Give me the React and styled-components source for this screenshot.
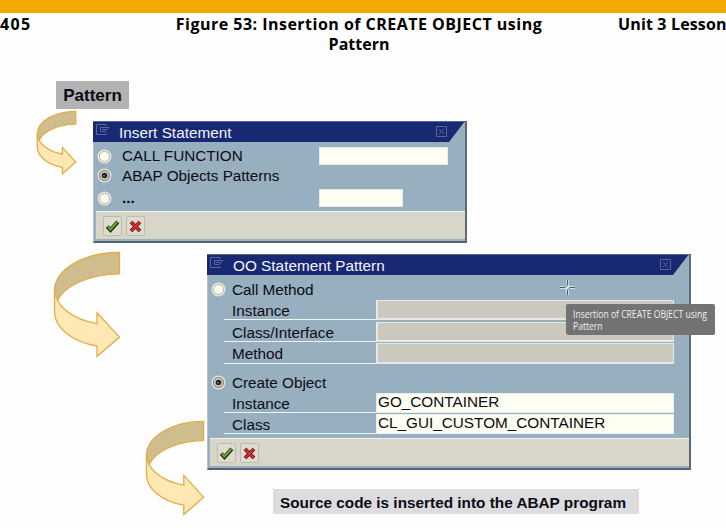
import React from "react";
import styled, { createGlobalStyle } from "styled-components";

const GlobalStyle = createGlobalStyle`
  * { box-sizing: border-box; }
  body { margin: 0; background: #fefefe; }
`;

const Page = styled.div`
  position: relative;
  width: 726px;
  height: 528px;
  overflow: hidden;
  background: #fefefe;
  color: #0a0c14;
  font: 15.3px/18px "Liberation Sans", Arial, sans-serif;
  white-space: nowrap;
`;

const TopBar = styled.div`
  height: 13px;
  background: #f2a900;
`;

const Header = styled.header`
  display: grid;
  grid-template-columns: 100px 518px 108px;
  height: 68px;
  padding-top: 1px;
  color: #000;
  font: 700 16px/20px "Open Sans", "Noto Sans", sans-serif;
`;

const HeaderText = styled.div`
  letter-spacing: ${(p) => p.$spacing}px;
  text-align: ${(p) => p.$align || "left"};
`;

const PatternTag = styled.div`
  width: 73px;
  height: 28px;
  margin-left: 56px;
  background: #b2b2b2;
  font-size: 17px;
  font-weight: bold;
  line-height: 30px;
  text-align: center;
`;

const Step = styled.section`
  display: flex;
  align-items: flex-start;
`;

const ArrowColumn = styled.div`
  display: flex;
  flex-direction: column;
  flex: none;
  width: ${(p) => p.$width}px;
`;

const ArrowSvg = styled.svg`
  display: block;
  width: ${(p) => p.$w}px;
  height: ${(p) => p.$h}px;
  margin: ${(p) => p.$top}px 0 0 ${(p) => p.$left}px;
  overflow: visible;

  path {
    stroke: #e3ad45;
    stroke-width: 1.3;
    vector-effect: non-scaling-stroke;
    stroke-linejoin: miter;
  }
`;

const Window = styled.div`
  display: flex;
  flex-direction: column;
  width: ${(p) => p.$w}px;
  height: ${(p) => p.$h}px;
  margin-top: ${(p) => p.$top}px;
  background: #98afbf;
  border-left: 1px solid #b9c2cc;
  border-right: 2px solid #5c6b7a;
  border-bottom: 2px solid #536474;
`;

const TitleBar = styled.div`
  display: flex;
  flex: none;
  height: 21px;
  margin-left: -1px;
  padding: 0 18px 0 3px;
  background: #182873;
  border-top: 1px solid #59648f;
  clip-path: polygon(0 0, 100% 0, calc(100% - 16px) 100%, 0 100%);
`;

const TitleText = styled.div`
  flex: 1;
  margin-left: 9px;
  color: #f4f5fa;
  letter-spacing: 0.02px;
  line-height: 22px;
`;

const TitleSvg = styled.svg`
  flex: none;
  margin-top: ${(p) => p.$top}px;
  fill: none;
  stroke: #5a659f;
`;

const Body = styled.div`
  flex: 1;
  padding-top: ${(p) => p.$top}px;
`;

const Footer = styled.div`
  display: flex;
  gap: 4px;
  flex: none;
  height: 28px;
  margin: 0 0 2px 2px;
  padding: 4px 0 0 7px;
  background: #d8d6c9;
  border-top: 1px solid #eef3f3;
`;

const ToolButton = styled.button`
  display: flex;
  align-items: center;
  justify-content: center;
  width: 19px;
  height: 20px;
  padding: 0;
  background: #dedccf;
  border: 1px solid #bdbbad;
  border-radius: 2px;
`;

const OptionRow = styled.label`
  display: flex;
  align-items: center;
  height: ${(p) => p.$h}px;
  margin-top: ${(p) => p.$gap || 0}px;
  padding-left: 3px;
`;

const OptionText = styled.span`
  width: 197px;
  margin-left: ${(p) => p.$left}px;
  letter-spacing: -0.02px;
  font-weight: ${(p) => (p.$bold ? "bold" : "normal")};
`;

const Entry = styled.div`
  width: ${(p) => p.$w}px;
  height: 18px;
  background: #fffef2;
  border: 1px solid #e2edf0;
`;

const FieldRow = styled.div`
  display: flex;
  height: ${(p) => p.$h}px;
  margin: ${(p) => p.$gap || 0}px 0 0 16px;
`;

const FieldLabel = styled.div`
  width: 152px;
  padding: 2px 0 0 8px;
  border-bottom: 1px solid #edf3f6;
  letter-spacing: 0;
`;

const FieldBox = styled.div`
  width: 298px;
  padding-left: 1px;
  background: ${(p) => (p.$disabled ? "#cbc9bd" : "#fffef2")};
  border: ${(p) => (p.$disabled ? "2px solid #e3e8e8" : "1px solid #e8f0ee")};
  border-width: ${(p) => (p.$disabled ? "1px 1px 2px 2px" : "1px")};
  letter-spacing: 0;
  line-height: 16px;
`;

const Result = styled.div`
  width: 366px;
  height: 25px;
  margin: 19px 0 0 66px;
  background: #dddddf;
  font-size: 15.3px;
  font-weight: bold;
  letter-spacing: 0.02px;
  line-height: 27px;
  padding-left: 7px;
`;

const Tooltip = styled.div`
  position: absolute;
  left: 566px;
  top: 304px;
  width: 149px;
  height: 31px;
  padding: 4px 7px;
  background: #737373;
  border-radius: 2px;
  color: #f0f0f0;
  font: 10.4px/12px "Open Sans", "Noto Sans", sans-serif;
`;

const TooltipText = styled.div`
  transform: scaleX(0.825);
  transform-origin: left;
`;

const Cursor = styled.svg`
  position: absolute;
  left: 560px;
  top: 280px;
`;

function Arrow({ w, h, top, left }) {
  return (
    <ArrowSvg $w={w} $h={h} $top={top} $left={left} viewBox="0 0 66 105.5" preserveAspectRatio="none">
      <path fill="#d0bd8e" d="M65.5 .5C30 .5 .5 17 .5 39C.5 43 1.5 46 3.5 49C10 34 36 22 65.5 22Z" />
      <path fill="#ffe8b3" d="M.5 37V60C.5 76 18 90 43 94.5V105L65.5 85.5L43 61V72C20 68 .5 55 .5 37Z" />
    </ArrowSvg>
  );
}

function Radio({ checked }) {
  return (
    <svg width="15" height="15" viewBox="0 0 15 15">
      <circle cx="7.5" cy="7.5" r="6.3" fill={checked ? "#c9c7bb" : "#fffef0"} stroke="#e6e6dc" strokeWidth="1.4" />
      <circle cx="7.5" cy="7.5" r="5.1" fill="none" stroke={checked ? "#77776f" : "#a9a79b"} strokeWidth=".9" />
      {checked && <circle cx="7.5" cy="7.5" r="2.8" fill="#25282c" />}
      {checked && <circle cx="7" cy="7.8" r=".8" fill="#8b9197" />}
    </svg>
  );
}

function Dialog({ title, w, h, top, bodyTop, children }) {
  return (
    <Window $w={w} $h={h} $top={top}>
      <TitleBar>
        <TitleSvg $top={1} width="14" height="13" viewBox="0 0 14 13">
          <path d="M10 3V1.5H.5V11.5H10V10M4.5 4.5H13L9.5 8.5H4.5ZM6 6.5H10" />
        </TitleSvg>
        <TitleText>{title}</TitleText>
        <TitleSvg $top={4} width="11" height="11" viewBox="0 0 11 11">
          <path d="M.5 .5H10.5V10.5H.5ZM3 3L8 8M8 3L3 8" />
        </TitleSvg>
      </TitleBar>
      <Body $top={bodyTop}>{children}</Body>
      <Footer>
        <ToolButton aria-label="Continue">
          <svg width="15" height="14" viewBox="0 0 15 14">
            <path d="M2.2 7.5L5.5 11L12.8 2.8" fill="none" stroke="#202a18" strokeWidth="4" />
            <path d="M2.8 7.5L5.5 10.5L12.3 3" fill="none" stroke="#68a82f" strokeWidth="2" />
          </svg>
        </ToolButton>
        <ToolButton aria-label="Cancel">
          <svg width="13" height="13" viewBox="0 0 13 13">
            <path d="M2 2L11 11M11 2L2 11" fill="none" stroke="#54161b" strokeWidth="3.8" />
            <path d="M2.3 2.3L10.7 10.7M10.7 2.3L2.3 10.7" fill="none" stroke="#dc2d35" strokeWidth="2.1" />
          </svg>
        </ToolButton>
      </Footer>
    </Window>
  );
}

function Field({ label, value, h, gap, disabled }) {
  return (
    <FieldRow $h={h} $gap={gap}>
      <FieldLabel>{label}</FieldLabel>
      <FieldBox $disabled={disabled}>{value}</FieldBox>
    </FieldRow>
  );
}

export default function App() {
  return (
    <Page>
      <GlobalStyle />
      <TopBar />
      <Header>
        <HeaderText $spacing={1.4}>405</HeaderText>
        <div>
          <HeaderText $spacing={0.48} $align="center">
            Figure 53: Insertion of CREATE OBJECT using
          </HeaderText>
          <HeaderText $spacing={0} $align="center">
            Pattern
          </HeaderText>
        </div>
        <HeaderText $spacing={0.15}>Unit 3 Lesson</HeaderText>
      </Header>

      <PatternTag>Pattern</PatternTag>
      <Step>
        <ArrowColumn $width={93}>
          <Arrow w={39} h={63} top={2} left={37} />
        </ArrowColumn>
        <Dialog title="Insert Statement" w={374} h={122} top={12} bodyTop={5}>
          <OptionRow $h={18}>
            <Radio />
            <OptionText $left={10}>CALL FUNCTION</OptionText>
            <Entry $w={129} />
          </OptionRow>
          <OptionRow $h={19} $gap={1}>
            <Radio checked />
            <OptionText $left={10}>ABAP Objects Patterns</OptionText>
          </OptionRow>
          <OptionRow $h={18} $gap={4}>
            <Radio />
            <OptionText $left={10} $bold>...</OptionText>
            <Entry $w={84} />
          </OptionRow>
        </Dialog>
      </Step>

      <Step>
        <ArrowColumn $width={207}>
          <Arrow w={66} h={105} top={9} left={54} />
          <Arrow w={58} h={94} top={64} left={146} />
        </ArrowColumn>
        <div>
          <Dialog title="OO Statement Pattern" w={484} h={216} top={11} bodyTop={4}>
            <OptionRow $h={21}>
              <Radio />
              <OptionText $left={6}>Call Method</OptionText>
            </OptionRow>
            <Field label="Instance" h={20} disabled />
            <Field label="Class/Interface" h={20} gap={2} disabled />
            <Field label="Method" h={21} gap={1} disabled />
            <OptionRow $h={21} $gap={8}>
              <Radio checked />
              <OptionText $left={6}>Create Object</OptionText>
            </OptionRow>
            <Field label="Instance" value="GO_CONTAINER" h={20} />
            <Field label="Class" value="CL_GUI_CUSTOM_CONTAINER" h={20} gap={1} />
          </Dialog>
          <Result>Source code is inserted into the ABAP program</Result>
        </div>
      </Step>

      <Cursor width="15" height="15" viewBox="0 0 15 15">
        <path d="M7.5 0V5M7.5 10V15M0 7.5H5M10 7.5H15" stroke="#e4ebee" strokeWidth="2.4" />
        <path d="M7.5 0V5M7.5 10V15M0 7.5H5M10 7.5H15" stroke="#4d5963" />
        <path d="M5.5 9.5L9.5 5.5" stroke="#e9eef0" strokeWidth="1.6" />
      </Cursor>
      <Tooltip>
        <TooltipText>
          Insertion of CREATE OBJECT using
          <br />
          Pattern
        </TooltipText>
      </Tooltip>
    </Page>
  );
}
